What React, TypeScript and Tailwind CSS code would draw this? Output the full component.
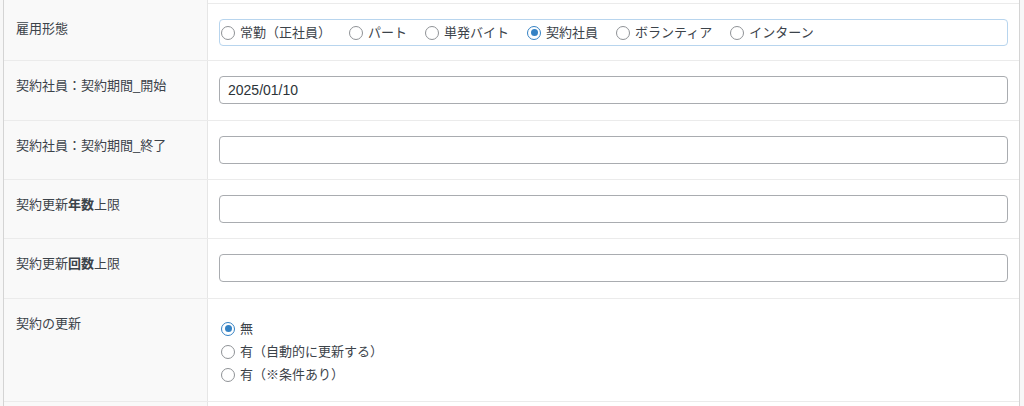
import React from "react";

const FONT = '"Liberation Sans", "Noto Sans CJK JP", sans-serif';

function Radio({ checked = false, label }: { checked?: boolean; label: React.ReactNode }) {
  return (
    <span className="inline-flex items-center">
      <span
        className={
          checked
            ? "flex items-center justify-center w-[14px] h-[14px] rounded-full border-[1.5px] border-[#3582c4] bg-white shrink-0"
            : "flex items-center justify-center w-[14px] h-[14px] rounded-full border border-[#8f9296] bg-white shrink-0"
        }
      >
        {checked && <span className="block w-[7px] h-[7px] rounded-full bg-[#3582c4]" />}
      </span>
      <span className="ml-[5px] text-[13px] leading-[20px] text-[#3c434a]">{label}</span>
    </span>
  );
}

function Row({
  h,
  label,
  children,
  top = true,
}: {
  h: string;
  label?: React.ReactNode;
  children?: React.ReactNode;
  top?: boolean;
}) {
  return (
    <div className={`flex ${top ? "border-t border-[#ebebeb]" : ""} ${h}`}>
      <div className="w-[204px] shrink-0 bg-[#f9f9f9] border-r border-[#e6e6e6] pl-[12px] pt-[15px] text-[13px] leading-[20px] text-[#3c434a]">
        {label}
      </div>
      <div className="flex-1 px-[11px] bg-white">{children}</div>
    </div>
  );
}

function TextInput({ value = "" }: { value?: string }) {
  return (
    <div className="mt-[15px] h-[28px] w-full rounded-[4px] border border-[#a9acb0] bg-white px-[8px] flex items-center text-[14px] text-[#2c3338]">
      {value}
    </div>
  );
}

export default function App() {
  return (
    <div className="w-[1024px] h-[406px] overflow-hidden bg-[#f7f7f7]" style={{ fontFamily: FONT }}>
      <div className="ml-[3px] w-[1017px] border-x border-[#d4d4d4]">
        <Row h="h-[3px]" top={false} />
        <Row h="h-[57px]" label="雇用形態">
          <div className="mt-[15px] h-[27px] w-full rounded-[4px] border border-[#b8d5ee] bg-white pl-[1px] flex items-center gap-[18px]">
            <Radio label="常勤（正社員）" />
            <Radio label="パート" />
            <Radio label="単発バイト" />
            <Radio checked label="契約社員" />
            <Radio label="ボランティア" />
            <Radio label="インターン" />
          </div>
        </Row>
        <Row h="h-[60px]" label="契約社員：契約期間_開始">
          <TextInput value="2025/01/10" />
        </Row>
        <Row h="h-[59px]" label="契約社員：契約期間_終了">
          <TextInput />
        </Row>
        <Row
          h="h-[59px]"
          label={
            <>
              契約更新<b className="font-bold">年数</b>上限
            </>
          }
        >
          <TextInput />
        </Row>
        <Row
          h="h-[60px]"
          label={
            <>
              契約更新<b className="font-bold">回数</b>上限
            </>
          }
        >
          <TextInput />
        </Row>
        <Row h="h-[103px]" label="契約の更新">
          <div className="pt-[18px] pl-[2px] flex flex-col">
            <div className="h-[23px] flex items-center">
              <Radio checked label="無" />
            </div>
            <div className="h-[23px] flex items-center">
              <Radio label="有（自動的に更新する）" />
            </div>
            <div className="h-[23px] flex items-center">
              <Radio label="有（※条件あり）" />
            </div>
          </div>
        </Row>
        <Row h="h-[10px]" />
      </div>
    </div>
  );
}
